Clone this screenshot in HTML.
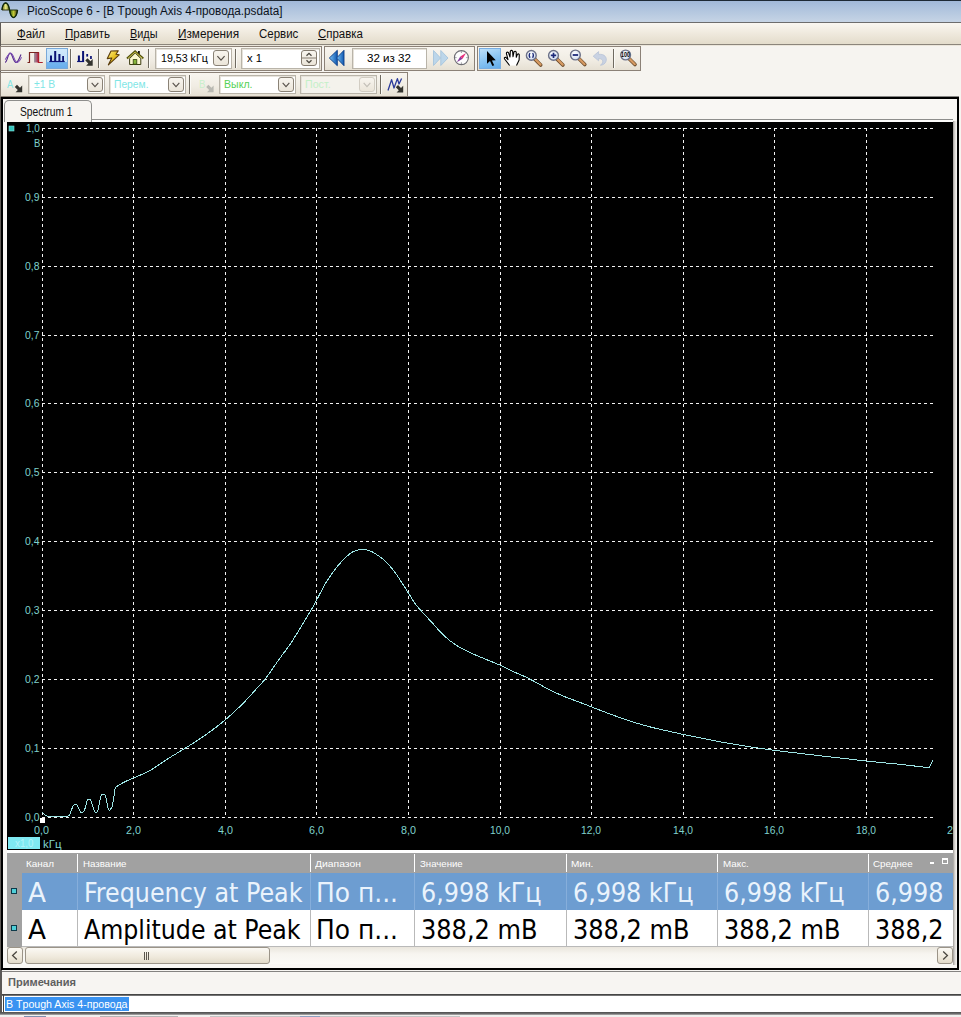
<!DOCTYPE html>
<html lang="ru"><head><meta charset="utf-8"><title>PicoScope 6</title>
<style>
html,body{margin:0;padding:0}
body{width:961px;height:1017px;position:relative;overflow:hidden;background:#f6f4f0;font-family:"Liberation Sans",sans-serif}
#app div,#app svg{position:absolute;box-sizing:border-box}
.t{position:absolute;white-space:nowrap;line-height:1;transform-origin:0 0;display:block}
.b{display:inline-block;width:0;height:0;vertical-align:baseline}
u{text-decoration:underline;text-underline-offset:1px}
</style></head><body><div id="app">
<div style="left:0px;top:0px;width:961px;height:22px;background:linear-gradient(#9fb7d8,#adc2dd 35%,#c6d4e5);"></div>
<div style="left:0px;top:0px;width:961px;height:1px;background:#1d2935;"></div>
<div style="left:0px;top:22px;width:961px;height:1px;background:#6d6d6d;"></div>
<div style="left:0px;top:23px;width:961px;height:21px;background:linear-gradient(#faf7f1,#efe9dd 50%,#e3dccb);"></div>
<div style="left:0px;top:44px;width:961px;height:1px;background:#8b857b;"></div>
<div style="left:0px;top:45px;width:961px;height:1px;background:#ebe6db;"></div>
<div style="left:0px;top:46px;width:961px;height:50px;background:#f6f4f0;"></div>
<div style="left:0px;top:23px;width:1px;height:994px;background:#5f5a55;"></div>
<div style="left:1px;top:96px;width:958px;height:874px;border:2px solid #000;border-top-width:3px;background:#f9f7f4;"></div>
<div style="left:0px;top:96px;width:961px;height:1px;background:rgba(246,244,240,.55);"></div>
<div style="left:959px;top:96px;width:2px;height:921px;background:#f6f4f0;"></div>
<svg style="left:7px;top:122px" width="946" height="728" viewBox="7 122 946 728"><rect x="7" y="122" width="946" height="728" fill="#000"/><g stroke="#f2f2f2" stroke-width="1" stroke-dasharray="3 3" shape-rendering="crispEdges" fill="none"><path d="M42 817.5H935"/><path d="M42 748.5H935"/><path d="M42 679.5H935"/><path d="M42 610.5H935"/><path d="M42 541.5H935"/><path d="M42 472.5H935"/><path d="M42 403.5H935"/><path d="M42 335.5H935"/><path d="M42 266.5H935"/><path d="M42 197.5H935"/><path d="M42 128.5H935"/><path d="M42.5 128V818"/><path d="M133.5 128V818"/><path d="M225.5 128V818"/><path d="M316.5 128V818"/><path d="M408.5 128V818"/><path d="M500.5 128V818"/><path d="M591.5 128V818"/><path d="M683.5 128V818"/><path d="M774.5 128V818"/><path d="M866.5 128V818"/></g><path d="M42.5 812.1C42.9 812.5 43.8 814.0 44.8 814.7C45.8 815.4 44.9 816.0 48.5 816.3C52.1 816.6 63.2 816.6 66.7 816.3C70.2 815.9 68.8 815.7 69.8 814.2C70.8 812.7 71.6 809.1 72.4 807.5C73.2 805.9 73.7 804.7 74.5 804.3C75.3 803.9 76.1 803.6 77.1 804.9C78.1 806.2 79.5 811.2 80.7 812.1C81.9 813.0 83.4 811.9 84.4 810.1C85.5 808.3 86.2 803.0 87.0 801.2C87.8 799.4 88.4 799.1 89.1 799.1C89.8 799.1 90.2 799.0 91.2 801.2C92.2 803.4 93.7 810.6 94.8 812.1C95.9 813.6 96.9 812.8 97.9 810.1C98.9 807.4 100.1 798.6 101.0 796.0C101.9 793.4 102.3 794.4 103.1 794.5C103.9 794.6 104.8 793.9 105.7 796.5C106.7 799.1 107.7 808.5 108.8 810.1C109.9 811.7 111.9 806.6 112.5 805.9L115.1 788.2L116.6 786.6C117.9 785.8 121.5 783.5 124.4 782.0C127.3 780.5 129.7 779.6 133.8 777.8C137.9 776.0 143.3 774.2 148.9 771.1C154.5 768.0 160.7 763.3 167.2 759.2C173.7 755.1 181.3 750.7 187.8 746.6C194.3 742.5 199.9 739.0 206.2 734.5C212.5 730.0 219.5 724.8 225.6 719.6C231.7 714.5 237.7 708.8 242.8 703.6C248.0 698.5 252.7 692.9 256.5 688.7C260.3 684.5 261.9 683.4 265.7 678.4C269.5 673.4 275.3 664.5 279.4 658.9C283.4 653.2 286.3 650.0 290.0 644.5C293.7 639.0 297.8 632.1 301.4 626.2C305.0 620.3 309.1 613.4 311.7 609.0C314.3 604.6 314.3 604.4 316.8 599.8C319.3 595.2 323.1 587.2 326.6 581.5C330.2 575.8 334.3 570.1 338.1 565.5C341.9 560.9 346.3 556.6 349.5 554.0C352.7 551.4 354.4 550.8 357.5 550.1C360.6 549.5 364.7 549.5 367.8 550.1C370.9 550.8 372.8 552.0 375.9 554.0C379.0 556.0 382.8 558.6 386.2 562.0C389.6 565.4 392.8 569.4 396.5 574.6C400.2 579.8 405.3 588.2 408.4 593.0C411.4 597.8 412.6 600.2 414.8 603.3C417.0 606.3 418.4 607.7 421.6 611.3C424.8 614.9 431.1 621.6 434.2 625.0C437.3 628.4 437.4 629.1 440.0 631.7C442.6 634.3 446.7 638.2 450.0 640.8C453.3 643.4 456.7 645.5 460.0 647.5C463.3 649.5 466.1 650.7 470.0 652.5C473.9 654.3 478.2 656.2 483.3 658.3C488.4 660.4 495.4 663.1 500.4 665.3C505.4 667.5 508.9 669.6 513.3 671.6C517.7 673.6 522.2 675.2 526.6 677.4C531.0 679.6 535.5 682.2 539.9 684.6C544.3 687.0 548.8 689.5 553.2 691.6C557.6 693.7 562.0 695.6 566.5 697.4C571.0 699.2 575.7 700.8 579.9 702.4C584.1 704.0 586.4 704.9 591.5 706.9C596.6 708.9 604.1 711.8 610.8 714.3C617.5 716.8 624.7 719.4 631.6 721.6C638.5 723.8 643.7 725.4 652.4 727.5C661.1 729.6 673.3 732.3 683.7 734.5C694.1 736.7 704.5 738.8 714.9 740.8C725.3 742.8 736.2 744.6 746.1 746.2C756.0 747.8 761.5 748.7 774.2 750.3C786.9 751.9 806.9 754.2 822.2 756.0C837.5 757.8 852.6 759.5 866.2 761.0C879.8 762.5 894.3 763.7 903.7 764.7C913.1 765.7 918.4 766.6 922.7 767.0C927.0 767.4 928.4 767.0 929.5 767.0L933 760" fill="none" stroke="#9ce4e4" stroke-width="1" stroke-linejoin="round" shape-rendering="crispEdges"/><rect x="9" y="126" width="5" height="5" fill="#35c4bc" stroke="#7fe0da" stroke-width="0.6"/><rect x="40" y="818" width="5" height="5" fill="#fff"/><rect x="8" y="837" width="32" height="12" fill="#7fe9f2"/></svg>
<div style="left:7px;top:850px;width:946px;height:3px;background:#fff;"></div>
<svg style="left:0;top:0" width="24" height="22" viewBox="0 0 24 22"><defs><linearGradient id="ic1" x1="0" y1="0" x2="1" y2="0"><stop offset="0" stop-color="#6b6a10"/><stop offset=".5" stop-color="#eef08a"/><stop offset="1" stop-color="#55600a"/></linearGradient><linearGradient id="ic2" x1="0" y1="0" x2="1" y2="0"><stop offset="0" stop-color="#2c5a10"/><stop offset=".5" stop-color="#c4cc38"/><stop offset="1" stop-color="#3a2a10"/></linearGradient></defs><path d="M2 10 C3 0.7 8 0.7 9.6 10Z" fill="url(#ic1)" stroke="#2a2a08" stroke-width="0.9"/><path d="M9.6 10 C11 20 16 20 17.6 10Z" fill="url(#ic2)" stroke="#142808" stroke-width="0.9"/><path d="M2 10 C3 0.7 8 0.7 9.6 10 C11 20 16 20 17.6 10" fill="none" stroke="#10280a" stroke-width="1.3"/></svg>
<div style="left:0px;top:46px;width:322px;height:25px;border:1px solid #8b8177;background:linear-gradient(#f8f5ef,#f1ede4 55%,#e6e0d3);"></div>
<div style="left:324px;top:46px;width:151px;height:25px;border:1px solid #8b8177;background:linear-gradient(#f8f5ef,#f1ede4 55%,#e6e0d3);"></div>
<div style="left:477px;top:46px;width:164px;height:25px;border:1px solid #8b8177;background:linear-gradient(#f8f5ef,#f1ede4 55%,#e6e0d3);"></div>
<div style="left:0px;top:72px;width:408px;height:25px;border:1px solid #8b8177;background:linear-gradient(#f8f5ef,#f1ede4 55%,#e6e0d3);"></div>
<div style="left:70px;top:49px;width:1px;height:19px;background:#6f6a60;"></div>
<div style="left:71px;top:49px;width:1px;height:19px;background:#fbfaf6;"></div>
<div style="left:98px;top:49px;width:1px;height:19px;background:#6f6a60;"></div>
<div style="left:99px;top:49px;width:1px;height:19px;background:#fbfaf6;"></div>
<div style="left:148px;top:49px;width:1px;height:19px;background:#6f6a60;"></div>
<div style="left:149px;top:49px;width:1px;height:19px;background:#fbfaf6;"></div>
<div style="left:235px;top:49px;width:1px;height:19px;background:#6f6a60;"></div>
<div style="left:236px;top:49px;width:1px;height:19px;background:#fbfaf6;"></div>
<div style="left:613px;top:49px;width:1px;height:19px;background:#6f6a60;"></div>
<div style="left:614px;top:49px;width:1px;height:19px;background:#fbfaf6;"></div>
<div style="left:189px;top:75px;width:1px;height:19px;background:#6f6a60;"></div>
<div style="left:190px;top:75px;width:1px;height:19px;background:#fbfaf6;"></div>
<div style="left:380px;top:75px;width:1px;height:19px;background:#6f6a60;"></div>
<div style="left:381px;top:75px;width:1px;height:19px;background:#fbfaf6;"></div>
<div style="left:155px;top:48px;width:77px;height:21px;border:1px solid #b9b4a9;background:#fff;box-shadow:inset 1px 1px 0 #e6e2da;"></div>
<div style="left:213px;top:50px;width:16px;height:16px;border:1px solid #8a8276;border-radius:3px;background:linear-gradient(#f8f5ef,#ebe5d9);"><svg style="left:0;top:0" width="14" height="14" viewBox="0 0 14 14"><path d="M3.4 5.2 L7 9.2 L10.6 5.2" fill="none" stroke="#57514a" stroke-width="1.2"/></svg></div>
<div style="left:241px;top:48px;width:79px;height:21px;border:1px solid #b9b4a9;background:#fff;box-shadow:inset 1px 1px 0 #e6e2da;"></div>
<div style="left:301px;top:50px;width:16px;height:16px;border:1px solid #857c70;border-radius:3px;background:linear-gradient(#f8f5ef,#ebe5d9);"><svg style="left:0;top:0" width="14" height="14" viewBox="0 0 14 14"><path d="M0 7H14" stroke="#857c70" stroke-width="1"/><path d="M4.5 4.8 L7 2.4 L9.5 4.8 M4.5 9.2 L7 11.6 L9.5 9.2" fill="none" stroke="#4a463f" stroke-width="1.3"/></svg></div>
<div style="left:352px;top:48px;width:75px;height:21px;border:1px solid #b9b4a9;background:#fff;box-shadow:inset 1px 1px 0 #e6e2da;"></div>
<div style="left:28px;top:75px;width:77px;height:19px;border:1px solid #b9b4a9;background:#fff;box-shadow:inset 1px 1px 0 #e6e2da;"></div>
<div style="left:87px;top:77px;width:16px;height:15px;border:1px solid #8a8276;border-radius:3px;background:linear-gradient(#f8f5ef,#ebe5d9);"><svg style="left:0;top:0" width="14" height="13" viewBox="0 0 14 14"><path d="M3.4 5.2 L7 9.2 L10.6 5.2" fill="none" stroke="#57514a" stroke-width="1.2"/></svg></div>
<div style="left:109px;top:75px;width:77px;height:19px;border:1px solid #b9b4a9;background:#fff;box-shadow:inset 1px 1px 0 #e6e2da;"></div>
<div style="left:168px;top:77px;width:16px;height:15px;border:1px solid #8a8276;border-radius:3px;background:linear-gradient(#f8f5ef,#ebe5d9);"><svg style="left:0;top:0" width="14" height="13" viewBox="0 0 14 14"><path d="M3.4 5.2 L7 9.2 L10.6 5.2" fill="none" stroke="#57514a" stroke-width="1.2"/></svg></div>
<div style="left:219px;top:75px;width:77px;height:19px;border:1px solid #b9b4a9;background:#fff;box-shadow:inset 1px 1px 0 #e6e2da;"></div>
<div style="left:278px;top:77px;width:16px;height:15px;border:1px solid #8a8276;border-radius:3px;background:linear-gradient(#f8f5ef,#ebe5d9);"><svg style="left:0;top:0" width="14" height="13" viewBox="0 0 14 14"><path d="M3.4 5.2 L7 9.2 L10.6 5.2" fill="none" stroke="#57514a" stroke-width="1.2"/></svg></div>
<div style="left:300px;top:75px;width:77px;height:19px;border:1px solid #b9b4a9;background:#f4f2ec;box-shadow:inset 1px 1px 0 #e6e2da;"></div>
<div style="left:359px;top:77px;width:16px;height:15px;border:1px solid #d2cdc3;border-radius:3px;background:linear-gradient(#f8f5ef,#ebe5d9);"><svg style="left:0;top:0" width="14" height="13" viewBox="0 0 14 14"><path d="M3.4 5.2 L7 9.2 L10.6 5.2" fill="none" stroke="#c2beb6" stroke-width="1.2"/></svg></div>
<div style="left:46px;top:48px;width:22px;height:21px;border:1px solid #79a9d9;background:linear-gradient(#cfe8fb,#c1e0f9 66%,#74b6ef 70%,#6aaeed);"></div>
<div style="left:479px;top:48px;width:22px;height:21px;border:1px solid #79aee2;background:linear-gradient(160deg,#bfe1fa,#8cc6f3 50%,#62acea);"></div>
<svg style="left:0;top:46px" width="660" height="50" viewBox="0 46 660 50"><defs>
<linearGradient id="gsq" x1="0" y1="0" x2="1" y2="0"><stop offset="0" stop-color="#9a9aa2"/><stop offset="1" stop-color="#b8204a"/></linearGradient>
<linearGradient id="gbolt" x1="0" y1="0" x2="1" y2="1"><stop offset="0" stop-color="#fff08a"/><stop offset=".5" stop-color="#e8c222"/><stop offset="1" stop-color="#a87808"/></linearGradient>
<linearGradient id="grw" x1="0" y1="0" x2="1" y2="0"><stop offset="0" stop-color="#7cc4f8"/><stop offset="1" stop-color="#0f58b0"/></linearGradient>
<linearGradient id="ghd" x1="0" y1="0" x2="1" y2="1"><stop offset="0" stop-color="#e8b078"/><stop offset="1" stop-color="#a86830"/></linearGradient>
<radialGradient id="glens" cx=".4" cy=".35" r=".7"><stop offset="0" stop-color="#ffffff"/><stop offset="1" stop-color="#cfdcf0"/></radialGradient>
</defs><path d="M5 62.4 C7.2 62.4 8 53.2 10 53.2 C12.4 53.2 13.4 62.5 16 62.5 C18.2 62.5 19.4 58 21 54.6" fill="none" stroke="#55298c" stroke-width="1.15"/><path d="M5.2 59.6 C7 57 8.6 53.2 10.8 53.2 C13.4 53.2 14.6 62.5 17.2 62.5 C19 62.5 20.4 59.6 21.6 57.2" fill="none" stroke="#7c4cb4" stroke-width="1.05"/><rect x="34" y="53" width="5" height="9.5" fill="url(#gsq)"/><path d="M27.5 62.5 H29.5 V52.5 H38.5 V62.5 H42.5" fill="none" stroke="#7a2420" stroke-width="1.2"/><path d="M38.5 52.5 V62.5 H42.5" fill="none" stroke="#b0202c" stroke-width="1.2"/><path d="M49.2 61.5 H64.7" stroke="#0a1274" stroke-width="1.2"/><rect x="50.0" y="55.5" width="2" height="6" fill="#0a1274"/><rect x="54.2" y="51" width="2" height="10.5" fill="#0a1274"/><rect x="58.400000000000006" y="54" width="2" height="7.5" fill="#0a1274"/><rect x="62.2" y="56" width="1.8" height="5.5" fill="#0a1274"/><path d="M77.1 61.5 H84.1" stroke="#0a1274" stroke-width="1.2"/><rect x="77.89999999999999" y="55.5" width="2" height="6" fill="#0a1274"/><rect x="82.1" y="51" width="2" height="10.5" fill="#0a1274"/><rect x="86.3" y="54" width="1.8" height="2.6" fill="#0a1274"/><rect x="90.1" y="56" width="1.7" height="3" fill="#0a1274"/><g transform="translate(92.7 65.7) scale(1.0)"><path d="M0 0 L-6.6 0 L-4.4 -2.2 L-7.4 -5.2 L-5.2 -7.4 L-2.2 -4.4 L0 -6.6 Z" fill="#33332e"/></g><path d="M111 51 L118.3 50.8 L116 54.3 L119.2 54.8 L108.4 64.8 L111.8 58 L107.3 58.6 Z" fill="url(#gbolt)" stroke="#5a3c0a" stroke-width="1.1" stroke-linejoin="round"/><rect x="138" y="51" width="1.8" height="4.5" fill="#111"/><path d="M129.6 58.5 V64.5 H140.8 V58.5 L135.2 53 Z" fill="#fbf8cf" stroke="#3c3c12" stroke-width="1"/><path d="M127 58.6 L135.1 51.3 L143.3 58.6" fill="none" stroke="#4e4e0c" stroke-width="2"/><path d="M127.8 58.4 L135.1 52 L142.5 58.4" fill="none" stroke="#e2d64a" stroke-width="0.8"/><rect x="133.2" y="59.6" width="3.6" height="4.6" fill="#86b53a" stroke="#33400e" stroke-width="0.8"/><path d="M329.3 58 L337.3 50.3 V65.7 Z" fill="url(#grw)" stroke="#0b3c86" stroke-width="0.9" stroke-linejoin="round"/><path d="M336.6 58 L344 50.3 V65.7 Z" fill="url(#grw)" stroke="#0b3c86" stroke-width="0.9" stroke-linejoin="round"/><path d="M433.5 50.5 L440.5 58 L433.5 65.5 Z M440.8 50.5 L448 58 L440.8 65.5 Z" fill="#bcd6ea" stroke="#a6c4dc" stroke-width="0.9" stroke-linejoin="round"/><circle cx="461.4" cy="57.6" r="7" fill="#fdfdfd" stroke="#6c6c72" stroke-width="1.1"/><path d="M461.4 51.2 V53 M461.4 62.3 V64 M455 57.6 H456.6 M466.2 57.6 H467.8" stroke="#8a8a90" stroke-width="0.8"/><path d="M456.8 62.3 L460.3 56.4 L462.6 58.7 Z" fill="#8a3aa0"/><path d="M466 53 L460.3 56.4 L462.6 58.7 Z" fill="#e8307a"/><path d="M487 51 V63.8 L490 61 L492.4 66 L494.2 65.2 L491.9 60.4 L495.8 60.2 Z" fill="#000"/><path d="M509.6 65.5 L504.6 59 Q503.8 57.3 505.6 57.2 L508 59.6 L506.4 53.4 Q506.6 51.6 508.4 52.4 L510 57 L510.3 51.2 Q511.4 49.6 512.6 51 L513 56.6 L514 51.8 Q515.2 50.6 516.2 52 L516.3 57.2 L517.4 54.4 Q518.6 53.2 519.3 54.8 L519.1 60 L516.5 65.5" fill="#fff" stroke="#000" stroke-width="1.1" stroke-linejoin="round"/><path d="M534.9 59.199999999999996 L540.6999999999999 65.0" stroke="#6a4a2a" stroke-width="3.6" stroke-linecap="round"/><path d="M535.1999999999999 59.3 L540.5 64.6" stroke="#d69a62" stroke-width="2.2" stroke-linecap="round"/><circle cx="531.3" cy="55.4" r="4.9" fill="url(#glens)" stroke="#6b7087" stroke-width="1.4"/><path d="M530 53 Q528.3 55.4 530 57.8 M532.6 53 Q534.3 55.4 532.6 57.8" fill="none" stroke="#1c2a7a" stroke-width="1.2"/><path d="M557.1 59.199999999999996 L562.9 65.0" stroke="#6a4a2a" stroke-width="3.6" stroke-linecap="round"/><path d="M557.4 59.3 L562.7 64.6" stroke="#d69a62" stroke-width="2.2" stroke-linecap="round"/><circle cx="553.5" cy="55.4" r="4.9" fill="url(#glens)" stroke="#6b7087" stroke-width="1.4"/><path d="M550.8 55.4 H556.2 M553.5 52.7 V58.1" stroke="#1c2a7a" stroke-width="1.7"/><path d="M579.0 58.8 L584.8 64.6" stroke="#6a4a2a" stroke-width="3.6" stroke-linecap="round"/><path d="M579.3 58.9 L584.6 64.2" stroke="#d69a62" stroke-width="2.2" stroke-linecap="round"/><circle cx="575.4" cy="55.0" r="4.9" fill="url(#glens)" stroke="#6b7087" stroke-width="1.4"/><path d="M572.7 55 H578.1" stroke="#1c2a7a" stroke-width="1.8"/><path d="M629.2 58.8 L635.0 64.6" stroke="#6a4a2a" stroke-width="3.6" stroke-linecap="round"/><path d="M629.5 58.9 L634.8000000000001 64.2" stroke="#d69a62" stroke-width="2.2" stroke-linecap="round"/><circle cx="625.6" cy="55.0" r="4.9" fill="url(#glens)" stroke="#6b7087" stroke-width="1.4"/><text x="625.6" y="57.3" text-anchor="middle" font-family="Liberation Sans, sans-serif" font-weight="bold" font-size="6.6" fill="#000" textLength="9" lengthAdjust="spacingAndGlyphs">100</text><path d="M593.2 56.2 L598.6 51.6 V54.4 C604.5 53.6 607.4 57.6 606 61.4 C605 64 602.6 65.2 600.4 65.2 C603.4 63.4 604.2 58.6 598.6 58.6 V60.8 Z" fill="#c9d2e2" stroke="#b3bfd4" stroke-width="0.7" stroke-linejoin="round"/><g transform="translate(22.2 92.2) scale(1.0)"><path d="M0 0 L-6.6 0 L-4.4 -2.2 L-7.4 -5.2 L-5.2 -7.4 L-2.2 -4.4 L0 -6.6 Z" fill="#33332e"/></g><g transform="translate(213.6 92.2) scale(1.0)"><path d="M0 0 L-6.6 0 L-4.4 -2.2 L-7.4 -5.2 L-5.2 -7.4 L-2.2 -4.4 L0 -6.6 Z" fill="#b9b9b2"/></g><path d="M388 90.5 L391.6 79.6 L394 88 L397.4 78.6 L399 84 L401.6 78.4" fill="none" stroke="#2a3a9a" stroke-width="1.3" stroke-linejoin="round"/><g transform="translate(403.2 92.4) scale(1.0)"><path d="M0 0 L-6.6 0 L-4.4 -2.2 L-7.4 -5.2 L-5.2 -7.4 L-2.2 -4.4 L0 -6.6 Z" fill="#33332e"/></g></svg>
<div style="left:4px;top:119px;width:949px;height:1px;background:#8e8e8c;"></div>
<div style="left:4px;top:120px;width:949px;height:2px;background:#fdfcfb;"></div>
<div style="left:4px;top:100px;width:88px;height:22px;border:1px solid #8e8e8c;border-bottom:none;border-radius:5px 5px 0 0;background:#f7f5f1;"></div>
<div style="left:953px;top:121px;width:4px;height:844px;background:linear-gradient(90deg,#a09c98,#dedbd7 50%,#f6f5f3);"></div>
<div style="left:7px;top:853px;width:946px;height:20px;background:#a1a1a1;"></div>
<div style="left:7px;top:873px;width:15px;height:74px;background:#a1a1a1;"></div>
<div style="left:22px;top:873px;width:931px;height:37px;background:#6d9dd1;"></div>
<div style="left:22px;top:910px;width:931px;height:37px;background:#fff;"></div>
<div style="left:77px;top:854px;width:1px;height:18px;background:#fff;"></div>
<div style="left:77px;top:873px;width:1px;height:37px;background:#86aedb;"></div>
<div style="left:77px;top:910px;width:1px;height:37px;background:#b9b9b9;"></div>
<div style="left:310px;top:854px;width:1px;height:18px;background:#fff;"></div>
<div style="left:310px;top:873px;width:1px;height:37px;background:#86aedb;"></div>
<div style="left:310px;top:910px;width:1px;height:37px;background:#b9b9b9;"></div>
<div style="left:414px;top:854px;width:1px;height:18px;background:#fff;"></div>
<div style="left:414px;top:873px;width:1px;height:37px;background:#86aedb;"></div>
<div style="left:414px;top:910px;width:1px;height:37px;background:#b9b9b9;"></div>
<div style="left:566px;top:854px;width:1px;height:18px;background:#fff;"></div>
<div style="left:566px;top:873px;width:1px;height:37px;background:#86aedb;"></div>
<div style="left:566px;top:910px;width:1px;height:37px;background:#b9b9b9;"></div>
<div style="left:717px;top:854px;width:1px;height:18px;background:#fff;"></div>
<div style="left:717px;top:873px;width:1px;height:37px;background:#86aedb;"></div>
<div style="left:717px;top:910px;width:1px;height:37px;background:#b9b9b9;"></div>
<div style="left:868px;top:854px;width:1px;height:18px;background:#fff;"></div>
<div style="left:868px;top:873px;width:1px;height:37px;background:#86aedb;"></div>
<div style="left:868px;top:910px;width:1px;height:37px;background:#b9b9b9;"></div>
<div style="left:22px;top:946px;width:931px;height:1px;background:#b9b9b9;"></div>
<div style="left:930px;top:862px;width:4px;height:2px;background:#fff;"></div>
<div style="left:942px;top:858px;width:6px;height:6px;border:1px solid #fff;border-top-width:2px;"></div>
<div style="left:11px;top:888px;width:6px;height:6px;border:1px solid #0e3a4a;background:#4fcfd8;"></div>
<div style="left:11px;top:925px;width:6px;height:6px;border:1px solid #0e3a4a;background:#4fcfd8;"></div>
<div style="left:7px;top:947px;width:946px;height:17px;background:linear-gradient(#e9e5dc,#f7f5f0 40%,#fbfaf7);"></div>
<div style="left:7px;top:947px;width:16px;height:17px;border:1px solid #9b9488;border-radius:3px;background:linear-gradient(#fbf9f4,#efe9dc 60%,#e2dac9);"><svg style="left:0;top:0" width="14" height="15" viewBox="0 0 14 15"><path d="M8.8 3.6 L4.6 7.5 L8.8 11.4" fill="none" stroke="#4a463f" stroke-width="1.3"/></svg></div>
<div style="left:937px;top:947px;width:16px;height:17px;border:1px solid #9b9488;border-radius:3px;background:linear-gradient(#fbf9f4,#efe9dc 60%,#e2dac9);"><svg style="left:0;top:0" width="14" height="15" viewBox="0 0 14 15"><path d="M5.2 3.6 L9.4 7.5 L5.2 11.4" fill="none" stroke="#4a463f" stroke-width="1.3"/></svg></div>
<div style="left:25px;top:947px;width:245px;height:17px;border:1px solid #9b9488;border-radius:3px;background:linear-gradient(#fbf9f4,#efe9dc 60%,#e2dac9);"><svg style="left:116px;top:4px" width="10" height="8" viewBox="0 0 10 8"><path d="M2.5 0V8M4.5 0V8M6.5 0V8" stroke="#5a554c" stroke-width="1"/></svg></div>
<div style="left:0px;top:970px;width:961px;height:47px;background:#f7f5f2;"></div>
<div style="left:0px;top:971px;width:961px;height:1px;background:#858381;"></div>
<div style="left:0px;top:994px;width:961px;height:2px;background:linear-gradient(#2e2e2e,#8a8a8a);"></div>
<div style="left:1px;top:996px;width:960px;height:16px;background:#fff;"></div>
<div style="left:0px;top:970px;width:2px;height:47px;background:#5a5755;"></div>
<div style="left:3px;top:994px;width:1px;height:20px;background:#444;"></div>
<div style="left:5px;top:997px;width:124px;height:14px;background:#3a93f1;"></div>
<div style="left:0px;top:1012px;width:961px;height:3px;background:linear-gradient(#4e4e4e,#6e6e6e 60%,#b8b8b8);"></div>
<div style="left:0px;top:1015px;width:961px;height:2px;background:#f1f0ee;"></div>
<div style="left:24px;top:1016px;width:22px;height:1px;background:#7d8fb0;"></div>
<div style="left:100px;top:1016px;width:78px;height:1px;background:#b5b5b5;"></div>
<div style="left:210px;top:1016px;width:150px;height:1px;background:#c4c4c4;"></div>
<div style="left:300px;top:1016px;width:20px;height:1px;background:#8da0c0;"></div>
<div style="left:345px;top:1016px;width:115px;height:1px;background:#c4c4c4;"></div>
<span class="t" style="left:25px;top:811.00px;font:normal 11.5px 'Liberation Sans', sans-serif;color:#7fd2cd;transform:scaleX(0.9062);">0,0</span>
<span class="t" style="left:25px;top:742.00px;font:normal 11.5px 'Liberation Sans', sans-serif;color:#7fd2cd;transform:scaleX(0.9062);">0,1</span>
<span class="t" style="left:25px;top:673.00px;font:normal 11.5px 'Liberation Sans', sans-serif;color:#7fd2cd;transform:scaleX(0.9062);">0,2</span>
<span class="t" style="left:25px;top:604.00px;font:normal 11.5px 'Liberation Sans', sans-serif;color:#7fd2cd;transform:scaleX(0.9062);">0,3</span>
<span class="t" style="left:25px;top:535.00px;font:normal 11.5px 'Liberation Sans', sans-serif;color:#7fd2cd;transform:scaleX(0.9062);">0,4</span>
<span class="t" style="left:25px;top:466.00px;font:normal 11.5px 'Liberation Sans', sans-serif;color:#7fd2cd;transform:scaleX(0.9062);">0,5</span>
<span class="t" style="left:25px;top:397.00px;font:normal 11.5px 'Liberation Sans', sans-serif;color:#7fd2cd;transform:scaleX(0.9062);">0,6</span>
<span class="t" style="left:25px;top:329.00px;font:normal 11.5px 'Liberation Sans', sans-serif;color:#7fd2cd;transform:scaleX(0.9062);">0,7</span>
<span class="t" style="left:25px;top:260.00px;font:normal 11.5px 'Liberation Sans', sans-serif;color:#7fd2cd;transform:scaleX(0.9062);">0,8</span>
<span class="t" style="left:25px;top:191.00px;font:normal 11.5px 'Liberation Sans', sans-serif;color:#7fd2cd;transform:scaleX(0.9062);">0,9</span>
<span class="t" style="left:26px;top:122.30px;font:normal 11.5px 'Liberation Sans', sans-serif;color:#7fd2cd;transform:scaleX(0.8625);">1,0</span>
<span class="t" style="left:33.5px;top:136.50px;font:normal 11.5px 'Liberation Sans', sans-serif;color:#7fd2cd;transform:scaleX(0.8212);">В</span>
<span class="t" style="left:34.0px;top:824.00px;font:normal 11.5px 'Liberation Sans', sans-serif;color:#7fd2cd;transform:scaleX(0.9375);">0,0</span>
<span class="t" style="left:125.5px;top:824.00px;font:normal 11.5px 'Liberation Sans', sans-serif;color:#7fd2cd;transform:scaleX(0.9375);">2,0</span>
<span class="t" style="left:217.5px;top:824.00px;font:normal 11.5px 'Liberation Sans', sans-serif;color:#7fd2cd;transform:scaleX(0.9375);">4,0</span>
<span class="t" style="left:308.5px;top:824.00px;font:normal 11.5px 'Liberation Sans', sans-serif;color:#7fd2cd;transform:scaleX(0.9375);">6,0</span>
<span class="t" style="left:400.5px;top:824.00px;font:normal 11.5px 'Liberation Sans', sans-serif;color:#7fd2cd;transform:scaleX(0.9375);">8,0</span>
<span class="t" style="left:490.0px;top:824.00px;font:normal 11.5px 'Liberation Sans', sans-serif;color:#7fd2cd;transform:scaleX(0.8932);">10,0</span>
<span class="t" style="left:581.0px;top:824.00px;font:normal 11.5px 'Liberation Sans', sans-serif;color:#7fd2cd;transform:scaleX(0.8932);">12,0</span>
<span class="t" style="left:673.0px;top:824.00px;font:normal 11.5px 'Liberation Sans', sans-serif;color:#7fd2cd;transform:scaleX(0.8932);">14,0</span>
<span class="t" style="left:764.0px;top:824.00px;font:normal 11.5px 'Liberation Sans', sans-serif;color:#7fd2cd;transform:scaleX(0.8932);">16,0</span>
<span class="t" style="left:856.0px;top:824.00px;font:normal 11.5px 'Liberation Sans', sans-serif;color:#7fd2cd;transform:scaleX(0.8932);">18,0</span>
<span class="t" style="left:947px;top:824.00px;font:normal 11.5px 'Liberation Sans', sans-serif;color:#7fd2cd;transform:scaleX(0.9366);">2</span>
<span class="t" style="left:43px;top:837.80px;font:normal 11.5px 'Liberation Sans', sans-serif;color:#7fd2cd;transform:scaleX(0.9958);">kГц</span>
<span class="t" style="left:15px;top:837.30px;font:normal 11.5px 'Liberation Sans', sans-serif;color:#b4f4fa;transform:scaleX(0.8506);">x1,0</span>
<span class="t" style="left:26.5px;top:3.70px;font:normal 12px 'Liberation Sans', sans-serif;color:#0b1220;transform:scaleX(0.9765);">PicoScope 6 - [В Tpough Axis 4-провода.psdata]</span>
<span class="t" style="left:16.5px;top:26.80px;font:normal 12px 'Liberation Sans', sans-serif;color:#111;transform:scaleX(0.9487);"><u>Ф</u>айл</span>
<span class="t" style="left:64.5px;top:26.80px;font:normal 12px 'Liberation Sans', sans-serif;color:#111;transform:scaleX(0.9613);"><u>П</u>равить</span>
<span class="t" style="left:129.5px;top:26.80px;font:normal 12px 'Liberation Sans', sans-serif;color:#111;transform:scaleX(0.9058);"><u>В</u>иды</span>
<span class="t" style="left:177.5px;top:26.80px;font:normal 12px 'Liberation Sans', sans-serif;color:#111;transform:scaleX(0.9802);"><u>И</u>змерения</span>
<span class="t" style="left:258.7px;top:26.80px;font:normal 12px 'Liberation Sans', sans-serif;color:#111;transform:scaleX(0.9563);">Сервис</span>
<span class="t" style="left:317.5px;top:26.80px;font:normal 12px 'Liberation Sans', sans-serif;color:#111;transform:scaleX(0.9555);"><u>С</u>правка</span>
<span class="t" style="left:160.8px;top:51.90px;font:normal 11px 'Liberation Sans', sans-serif;color:#000;transform:scaleX(0.9681);">19,53 kГц</span>
<span class="t" style="left:247px;top:51.90px;font:normal 11px 'Liberation Sans', sans-serif;color:#000;transform:scaleX(1.0213);">x 1</span>
<span class="t" style="left:367px;top:51.90px;font:normal 11px 'Liberation Sans', sans-serif;color:#000;transform:scaleX(1.0531);">32 из 32</span>
<span class="t" style="left:34px;top:77.80px;font:normal 11px 'Liberation Sans', sans-serif;color:#7fe6e6;transform:scaleX(0.9440);">±1 В</span>
<span class="t" style="left:113.5px;top:77.80px;font:normal 11px 'Liberation Sans', sans-serif;color:#7fe6e6;transform:scaleX(0.9352);">Перем.</span>
<span class="t" style="left:223.5px;top:77.80px;font:normal 11px 'Liberation Sans', sans-serif;color:#55d155;transform:scaleX(0.9610);">Выкл.</span>
<span class="t" style="left:305px;top:77.80px;font:normal 11px 'Liberation Sans', sans-serif;color:#c4f0c8;transform:scaleX(0.9695);">Пост.</span>
<span class="t" style="left:7.4px;top:77.60px;font:normal 11px 'Liberation Sans', sans-serif;color:#86e6e6;transform:scaleX(0.8443);">A</span>
<span class="t" style="left:199px;top:77.60px;font:normal 11px 'Liberation Sans', sans-serif;color:#c9f0cc;transform:scaleX(0.8715);">B</span>
<span class="t" style="left:20px;top:104.80px;font:normal 12px 'Liberation Sans', sans-serif;color:#111;transform:scaleX(0.8556);">Spectrum 1</span>
<span class="t" style="left:26px;top:858.90px;font:normal 9.2px 'Liberation Sans', sans-serif;color:#fff;transform:scaleX(1.0763);">Канал</span>
<span class="t" style="left:82.5px;top:858.90px;font:normal 9.2px 'Liberation Sans', sans-serif;color:#fff;transform:scaleX(1.0594);">Название</span>
<span class="t" style="left:315px;top:858.90px;font:normal 9.2px 'Liberation Sans', sans-serif;color:#fff;transform:scaleX(1.1288);">Диапазон</span>
<span class="t" style="left:420.3px;top:858.90px;font:normal 9.2px 'Liberation Sans', sans-serif;color:#fff;transform:scaleX(1.0479);">Значение</span>
<span class="t" style="left:571.4px;top:858.90px;font:normal 9.2px 'Liberation Sans', sans-serif;color:#fff;transform:scaleX(1.0920);">Мин.</span>
<span class="t" style="left:722.6px;top:858.90px;font:normal 9.2px 'Liberation Sans', sans-serif;color:#fff;transform:scaleX(1.0687);">Макс.</span>
<span class="t" style="left:873.3px;top:858.90px;font:normal 9.2px 'Liberation Sans', sans-serif;color:#fff;transform:scaleX(1.0640);">Среднее</span>
<span class="t" style="left:27.7px;top:877.70px;font:normal 26px 'DejaVu Sans Condensed', 'DejaVu Sans', 'Liberation Sans', sans-serif;color:#eaf3fc;transform:scaleX(1.1250);">A</span>
<span class="t" style="left:83.7px;top:877.70px;font:normal 26px 'DejaVu Sans Condensed', 'DejaVu Sans', 'Liberation Sans', sans-serif;color:#eaf3fc;transform:scaleX(1.0190);">Frequency at Peak</span>
<span class="t" style="left:316.2px;top:877.70px;font:normal 26px 'DejaVu Sans Condensed', 'DejaVu Sans', 'Liberation Sans', sans-serif;color:#eaf3fc;transform:scaleX(1.0660);">По п...</span>
<span class="t" style="left:421.2px;top:877.70px;font:normal 26px 'DejaVu Sans Condensed', 'DejaVu Sans', 'Liberation Sans', sans-serif;color:#eaf3fc;transform:scaleX(1.0211);">6,998 kГц</span>
<span class="t" style="left:572.7px;top:877.70px;font:normal 26px 'DejaVu Sans Condensed', 'DejaVu Sans', 'Liberation Sans', sans-serif;color:#eaf3fc;transform:scaleX(1.0202);">6,998 kГц</span>
<span class="t" style="left:723.7px;top:877.70px;font:normal 26px 'DejaVu Sans Condensed', 'DejaVu Sans', 'Liberation Sans', sans-serif;color:#eaf3fc;transform:scaleX(1.0202);">6,998 kГц</span>
<span class="t" style="left:874.7px;top:877.70px;font:normal 26px 'DejaVu Sans Condensed', 'DejaVu Sans', 'Liberation Sans', sans-serif;color:#eaf3fc;transform:scaleX(1.0231);">6,998</span>
<span class="t" style="left:27.7px;top:914.70px;font:normal 26px 'DejaVu Sans Condensed', 'DejaVu Sans', 'Liberation Sans', sans-serif;color:#000;transform:scaleX(1.1250);">A</span>
<span class="t" style="left:83.7px;top:914.70px;font:normal 26px 'DejaVu Sans Condensed', 'DejaVu Sans', 'Liberation Sans', sans-serif;color:#000;transform:scaleX(1.0132);">Amplitude at Peak</span>
<span class="t" style="left:316.2px;top:914.70px;font:normal 26px 'DejaVu Sans Condensed', 'DejaVu Sans', 'Liberation Sans', sans-serif;color:#000;transform:scaleX(1.0660);">По п...</span>
<span class="t" style="left:421.2px;top:914.70px;font:normal 26px 'DejaVu Sans Condensed', 'DejaVu Sans', 'Liberation Sans', sans-serif;color:#000;transform:scaleX(1.0290);">388,2 mB</span>
<span class="t" style="left:572.7px;top:914.70px;font:normal 26px 'DejaVu Sans Condensed', 'DejaVu Sans', 'Liberation Sans', sans-serif;color:#000;transform:scaleX(1.0290);">388,2 mB</span>
<span class="t" style="left:723.7px;top:914.70px;font:normal 26px 'DejaVu Sans Condensed', 'DejaVu Sans', 'Liberation Sans', sans-serif;color:#000;transform:scaleX(1.0290);">388,2 mB</span>
<span class="t" style="left:874.7px;top:914.70px;font:normal 26px 'DejaVu Sans Condensed', 'DejaVu Sans', 'Liberation Sans', sans-serif;color:#000;transform:scaleX(1.0231);">388,2</span>
<span class="t" style="left:8px;top:975.60px;font:bold 11px 'Liberation Sans', sans-serif;color:#5f5f5f;transform:scaleX(1.0044);">Примечания</span>
<span class="t" style="left:6px;top:998.30px;font:normal 11px 'Liberation Sans', sans-serif;color:#fff;transform:scaleX(0.9636);">В Tpough Axis 4-провода</span>
</div></body></html>
